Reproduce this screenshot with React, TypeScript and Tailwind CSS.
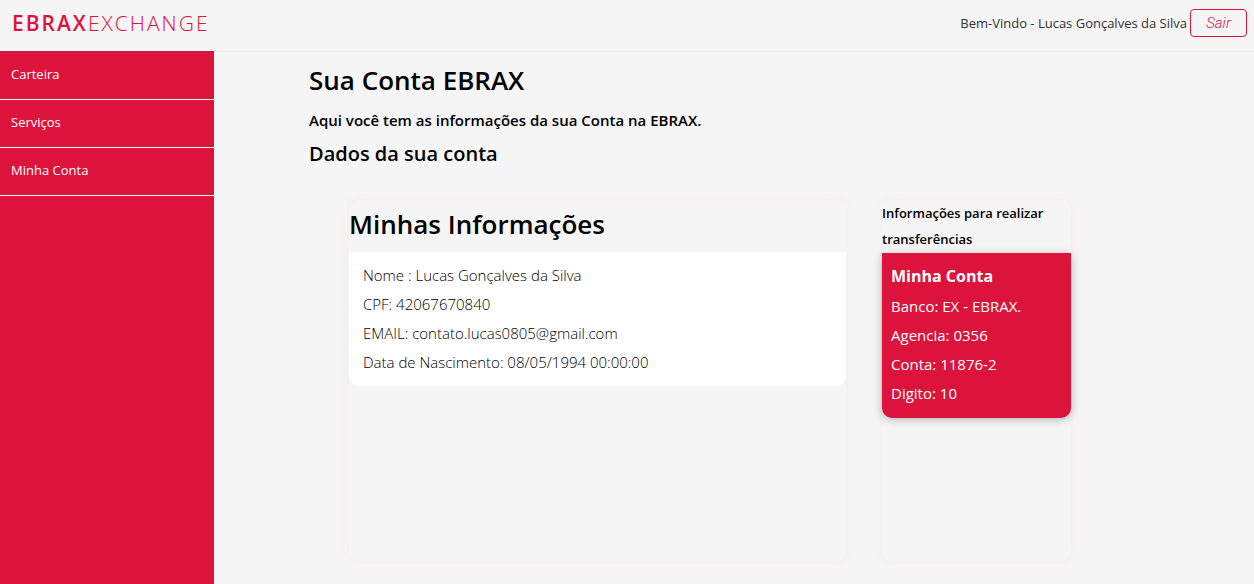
const menu = ["Carteira", "Serviços", "Minha Conta"];

const personal = [
  "Nome : Lucas Gonçalves da Silva",
  "CPF: 42067670840",
  "EMAIL: contato.lucas0805@gmail.com",
  "Data de Nascimento: 08/05/1994 00:00:00",
];

const bank = ["Banco: EX - EBRAX.", "Agencia: 0356", "Conta: 11876-2", "Digito: 10"];

function Header() {
  return (
    <header className="z-10 flex h-[51px] items-start justify-between pl-3 pr-[7px] shadow-[0_1px_1px_rgba(0,0,0,0.04)]">
      <a href="#" className="pt-1 text-[21px] leading-[38px] tracking-[2px] text-[#dc143c]">
        <strong className="font-semibold">EBRAX</strong>
        <span className="font-light">EXCHANGE</span>
      </a>
      <div className="flex items-center gap-[3px] pt-[9px]">
        <span className="text-[13px] leading-7 text-[#333]">Bem-Vindo - Lucas Gonçalves da Silva</span>
        <button
          type="button"
          className="h-7 w-[57px] rounded border border-[#dc143c] font-['Roboto',sans-serif] text-[15px] font-light italic text-[#dc143c]"
        >
          Sair
        </button>
      </div>
    </header>
  );
}

function Sidebar() {
  return (
    <nav className="w-[214px] shrink-0 bg-[#dc143c] pt-px">
      <ul>
        {menu.map((item) => (
          <li key={item} className="border-b border-white">
            <a href="#" className="block px-[11px] pb-[2px] text-[13px] font-medium leading-[45px] text-white">
              {item}
            </a>
          </li>
        ))}
      </ul>
    </nav>
  );
}

export default function App() {
  return (
    <div className="flex min-h-screen flex-col bg-[#f5f5f5] font-['Open_Sans',sans-serif] text-black">
      <Header />
      <div className="flex grow">
        <Sidebar />
        <main className="grow px-[95px] pb-[22px] pt-2">
          <h1 className="text-[26px] font-semibold leading-[42px]">Sua Conta EBRAX</h1>
          <h3 className="text-[15px] font-semibold leading-[38px]">Aqui você tem as informações da sua Conta na EBRAX.</h3>
          <h2 className="text-xl font-semibold leading-[30px]">Dados da sua conta</h2>
          <div className="ml-10 mr-[88px] mt-[31px] grid grid-cols-[497fr_189fr] items-stretch gap-9">
            <section className="min-h-[361px] rounded-[10px] shadow-[0_0_10px_rgba(220,20,60,0.05)]">
              <h2 className="pb-1 text-[26px] font-semibold leading-[48px]">Minhas Informações</h2>
              <ul className="rounded-b-[10px] bg-white px-[14px] py-[9px] text-[15px] font-light leading-[29px] text-black">
                {personal.map((line) => (
                  <li key={line}>{line}</li>
                ))}
              </ul>
            </section>
            <section className="rounded-[10px] shadow-[0_0_10px_rgba(220,20,60,0.05)]">
              <h4 className="text-[13px] font-semibold leading-[26px]">Informações para realizar transferências</h4>
              <div className="mt-px rounded-b-[10px] bg-[#dc143c] px-[9px] pb-[10px] pt-[7px] text-white shadow-[0_2px_8px_rgba(0,0,0,0.25)]">
                <h3 className="text-base font-bold leading-8">Minha Conta</h3>
                <ul className="text-[15px] leading-[29px]">
                  {bank.map((line) => (
                    <li key={line}>{line}</li>
                  ))}
                </ul>
              </div>
            </section>
          </div>
        </main>
      </div>
    </div>
  );
}
